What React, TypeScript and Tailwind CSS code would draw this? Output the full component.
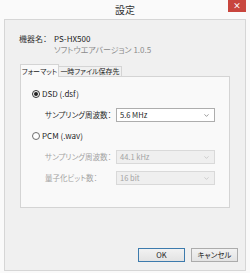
import { ChevronDown } from "lucide-react";

const jp = "font-['Noto_Sans_CJK_JP',sans-serif] [font-feature-settings:'palt']";

function Radio({ checked, label }: { checked: boolean; label: string }) {
  return (
    <div className="flex items-center h-[11px] gap-[2px]">
      <span
        className={`w-[8px] h-[8px] rounded-full border bg-white flex items-center justify-center ${
          checked ? "border-[#333]" : "border-[#6d6d6d]"
        }`}
      >
        {checked && <span className="w-[4px] h-[4px] rounded-full bg-[#222]" />}
      </span>
      <span className="text-[8px] text-[#1e1e1e] leading-none">{label}</span>
    </div>
  );
}

function SelectRow({
  label,
  value,
  disabled,
}: {
  label: string;
  value: string;
  disabled?: boolean;
}) {
  return (
    <div className="flex items-center">
      <span
        className={`w-[71px] ml-[13px] text-[7.5px] leading-none whitespace-nowrap ${
          disabled ? "text-[#a3a3a3]" : "text-[#2a2a2a]"
        }`}
      >
        {label}
      </span>
      <div
        className={`w-[99px] h-[14px] border flex items-center justify-between pl-[3px] pr-[4px] ${
          disabled
            ? "border-[#d9d9d9] bg-[#efefef] text-[#a3a3a3]"
            : "border-[#adadad] bg-white text-[#1e1e1e]"
        }`}
      >
        <span className="text-[7.5px] leading-none">{value}</span>
        <ChevronDown
          size={7}
          strokeWidth={2}
          className={disabled ? "text-[#b4b4b4]" : "text-[#555]"}
        />
      </div>
    </div>
  );
}

export default function App() {
  return (
    <div className={`w-[250px] h-[273px] bg-[#fafafa] flex flex-col ${jp}`}>
      {/* Title bar */}
      <div className="relative h-[19px] flex items-center justify-center">
        <span className="text-[10px] text-[#333] leading-none mt-[1px]">設定</span>
        <div className="absolute top-0 right-[4px] w-[18px] h-[12px] bg-[#c8453d] flex items-center justify-center">
          <span className="text-white text-[8px] font-bold leading-none">×</span>
        </div>
      </div>

      {/* Client */}
      <div className="mx-[4px] h-[252px] border border-[#d6d6d6] bg-[#f0f0f0] flex flex-col">
        <div className="pl-[14px] pt-[13px] grid grid-cols-[35px_1fr] text-[8px] leading-[11px]">
          <span className="text-[#333]">機器名：</span>
          <span className="text-[#222]">PS-HX500</span>
          <span />
          <span className="text-[#8c8c8c]">ソフトウエアバージョン 1.0.5</span>
        </div>

        {/* Tabs */}
        <div className="mt-[9px] mx-[15px] flex items-end h-[12px]">
          <div className="h-[13px] w-[39px] border border-b-0 border-[#d4d4d4] bg-[#f9f9f9] relative top-[1px] z-10 flex items-center justify-center whitespace-nowrap text-[7px] leading-none text-[#222]">
            フォーマット
          </div>
          <div className="h-[10px] w-[63px] border border-b-0 border-l-0 border-[#d4d4d4] bg-[#f0f0f0] flex items-center justify-center whitespace-nowrap text-[7px] leading-none text-[#222]">
            一時ファイル保存先
          </div>
        </div>
        <div className="mx-[15px] h-[132px] border border-[#d4d4d4] bg-[#f9f9f9] pl-[11px] pt-[11px] flex flex-col">
          <Radio checked label="DSD (.dsf)" />
          <div className="mt-[9px]">
            <SelectRow label="サンプリング周波数：" value="5.6 MHz" />
          </div>
          <div className="mt-[8px]">
            <Radio checked={false} label="PCM (.wav)" />
          </div>
          <div className="mt-[9px]">
            <SelectRow disabled label="サンプリング周波数：" value="44.1 kHz" />
          </div>
          <div className="mt-[7px]">
            <SelectRow disabled label="量子化ビット数：" value="16 bit" />
          </div>
        </div>

        {/* Buttons */}
        <div className="mt-auto mb-[8px] mr-[7px] flex justify-end gap-[6px]">
          <button className="w-[47px] h-[14px] border border-[#3d7bad] bg-gradient-to-b from-[#f2f2f2] to-[#e3e3e3] text-[7.5px] leading-none text-[#222]">
            OK
          </button>
          <button className="w-[47px] h-[14px] border border-[#acacac] bg-gradient-to-b from-[#f2f2f2] to-[#e3e3e3] text-[7.5px] leading-none text-[#222]">
            キャンセル
          </button>
        </div>
      </div>
    </div>
  );
}
